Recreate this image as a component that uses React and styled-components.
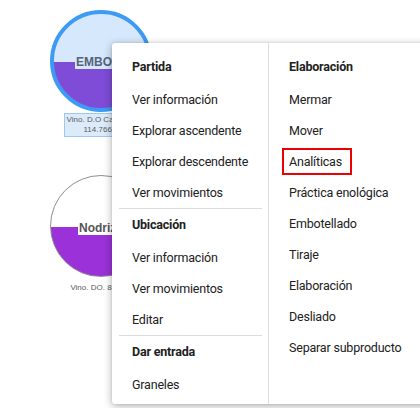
import React from "react";
import styled, { createGlobalStyle } from "styled-components";

const GlobalStyle = createGlobalStyle`
    html, body {
        margin: 0;
        padding: 0;
        background: #ffffff;
        overflow: hidden;
    }
    body {
        font-family: Roboto, "Liberation Sans", Arial, sans-serif;
    }
`;

const Canvas = styled.div`
    position: relative;
    width: 420px;
    height: 408px;
    overflow: hidden;
    background: #ffffff;
`;

/* tank nodes on the plant canvas */
const Node = styled.div`
    position: absolute;
    display: flex;
    flex-direction: column;
    align-items: center;
    width: 102px;
`;

const Circle = styled.div`
    position: relative;
    box-sizing: border-box;
    width: 102px;
    height: 102px;
    border-radius: 50%;
    border: ${({ selected }) => (selected ? "4px solid #3d9bf6" : "1px solid #8f8f8f")};
    background: linear-gradient(
        to bottom,
        ${({ top }) => top} ${({ level }) => level}%,
        ${({ fill }) => fill} ${({ level }) => level}%
    );
    display: flex;
    align-items: center;
    justify-content: center;
`;

const TankLabel = styled.span`
    position: absolute;
    top: ${({ y }) => y}px;
    font-family: "Liberation Sans", Arial, sans-serif;
    font-weight: bold;
    font-size: 12px;
    line-height: 14px;
    padding: 0 1px;
    color: ${({ color }) => color};
    background: ${({ bg }) => bg};
`;

const Caption = styled.div`
    margin-top: ${({ gap }) => gap}px;
    padding: 1px 2px;
    font-family: "Liberation Sans", Arial, sans-serif;
    font-size: 8px;
    line-height: 10px;
    color: #5a5a5a;
    text-align: center;
    white-space: nowrap;
    border: 1px solid ${({ selected }) => (selected ? "#9ec8f2" : "transparent")};
    background: ${({ selected }) => (selected ? "#dcebfa" : "transparent")};
`;

const Tank = ({ x, y, name, caption, selected, top, fill, level, labelY, labelColor, labelBg, gap }) => (
    <Node style={{ left: x, top: y }}>
        <Circle selected={selected} top={top} fill={fill} level={level}>
            <TankLabel y={labelY} color={labelColor} bg={labelBg}>
                {name}
            </TankLabel>
        </Circle>
        <Caption selected={selected} gap={gap}>
            {caption.map((line) => (
                <div key={line}>{line}</div>
            ))}
        </Caption>
    </Node>
);

/* context menu */
const Menu = styled.div`
    position: absolute;
    left: 112px;
    top: 43px;
    width: 318px;
    display: flex;
    background: #ffffff;
    border-radius: 3px;
    box-shadow: 0 2px 8px rgba(0, 0, 0, 0.32), 0 0 2px rgba(0, 0, 0, 0.12);
`;

const Column = styled.div`
    display: flex;
    flex-direction: column;
    box-sizing: border-box;
    width: ${({ width }) => width}px;
    padding: 8px 0 4px;
    border-right: ${({ divided }) => (divided ? "1px solid #dedede" : "none")};
`;

const Header = styled.div`
    box-sizing: border-box;
    height: 33px;
    padding: 0 0 3px ${({ indent }) => indent}px;
    display: flex;
    align-items: center;
    font-size: 12.5px;
    letter-spacing: -0.2px;
    font-weight: 700;
    color: #212121;
`;

const Item = styled.div`
    height: 31px;
    display: flex;
    align-items: center;
    padding-left: ${({ indent }) => indent}px;
    font-size: 12.5px;
    letter-spacing: -0.2px;
    color: #212121;
    white-space: nowrap;
`;

const Marked = styled.span`
    margin-left: -7px;
    padding: 0 8px 0 5px;
    height: 23px;
    line-height: 23px;
    border: 2px solid #ee0000;
`;

const Divider = styled.div`
    height: 1px;
    margin: 0 6px 0 7px;
    background: #dcdcdc;
`;

const leftGroups = [
    { title: "Partida", items: ["Ver información", "Explorar ascendente", "Explorar descendente", "Ver movimientos"] },
    { title: "Ubicación", items: ["Ver información", "Ver movimientos", "Editar"] },
    { title: "Dar entrada", items: ["Graneles"] },
];

const rightItems = [
    "Mermar",
    "Mover",
    "Analíticas",
    "Práctica enológica",
    "Embotellado",
    "Tiraje",
    "Elaboración",
    "Desliado",
    "Separar subproducto",
];

const App = () => (
    <Canvas>
        <GlobalStyle />
        <Tank
            x={50}
            y={10}
            name="EMBOT1"
            caption={["Vino. D.O Cataluña", "114.766 L"]}
            selected
            top="#d6e8fb"
            fill="#7e4cd7"
            level={51}
            labelY={41}
            labelColor="#56627a"
            labelBg="#d6e8fb"
            gap={1}
        />
        <Tank
            x={50}
            y={175}
            name="Nodriza"
            caption={["Vino. DO. 8400 L"]}
            top="#ffffff"
            fill="#9b31d8"
            level={51}
            labelY={45}
            labelColor="#555555"
            labelBg="#ffffff"
            gap={4}
        />
        <Menu>
            <Column width={157} divided>
                {leftGroups.map((group, i) => (
                    <React.Fragment key={group.title}>
                        {i > 0 && <Divider />}
                        <Header indent={20}>{group.title}</Header>
                        {group.items.map((item) => (
                            <Item key={item} indent={20}>
                                {item}
                            </Item>
                        ))}
                    </React.Fragment>
                ))}
            </Column>
            <Column width={161}>
                <Header indent={20}>Elaboración</Header>
                {rightItems.map((item) => (
                    <Item key={item} indent={20}>
                        {item === "Analíticas" ? <Marked>{item}</Marked> : item}
                    </Item>
                ))}
            </Column>
        </Menu>
    </Canvas>
);

export default App;
